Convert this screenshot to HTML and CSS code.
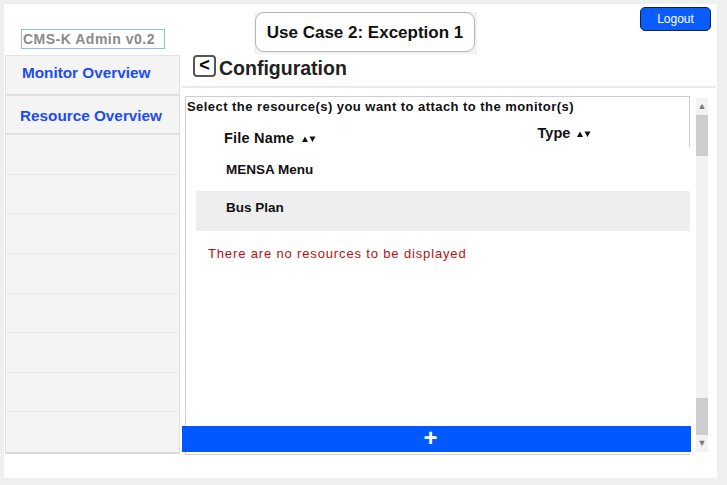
FILE: index.html
```html
<!DOCTYPE html>
<html>
<head>
<meta charset="utf-8">
<link rel="stylesheet" href="styles.css">
</head>
<body>
<div class="page">
  <header class="topbar">
    <div class="brand">CMS-K Admin v0.2</div>
    <div class="title-wrap"><div class="title">Use Case 2: Exception 1</div></div>
    <button class="logout">Logout</button>
  </header>
  <div class="body">
    <nav class="sidebar">
      <div class="nav-item nav-monitor">Monitor Overview</div>
      <div class="nav-item nav-resource">Resource Overview</div>
      <div class="nav-item"></div>
      <div class="nav-item"></div>
      <div class="nav-item"></div>
      <div class="nav-item"></div>
      <div class="nav-item"></div>
      <div class="nav-item"></div>
      <div class="nav-item"></div>
      <div class="nav-item last"></div>
    </nav>
    <main class="main">
      <div class="main-head">
        <span class="back">&lt;</span>
        <h1 class="heading">Configuration</h1>
      </div>
      <div class="content">
        <div class="box">
          <div class="box-top">
            <p class="hint">Select the resource(s) you want to attach to the monitor(s)</p>
            <div class="thead">
              <span class="col-name">File Name <svg class="sort" width="14" height="8" viewBox="0 0 14 8"><path d="M0 7 L3 1.5 L6 7 Z M7.5 1.5 L13.5 1.5 L10.5 7 Z" fill="#111"/></svg></span>
              <span class="col-type">Type <svg class="sort" width="14" height="8" viewBox="0 0 14 8"><path d="M0 7 L3 1.5 L6 7 Z M7.5 1.5 L13.5 1.5 L10.5 7 Z" fill="#111"/></svg></span>
            </div>
          </div>
          <div class="row row-mensa">MENSA Menu</div>
          <div class="row row-bus">Bus Plan</div>
          <p class="empty">There are no resources to be displayed</p>
          <div class="addbar">+</div>
        </div>
        <div class="scrollbar">
          <span class="arrow">▲</span>
          <div class="thumb thumb-a"></div>
          <div class="track"></div>
          <div class="thumb thumb-b"></div>
          <span class="arrow">▼</span>
        </div>
      </div>
    </main>
  </div>
</div>
</body>
</html>
```

FILE: styles.css
```css
* { box-sizing: border-box; }
html, body { margin: 0; }
body {
  background: #efefef;
  padding: 4px 10px 7px 4px;
  font-family: "Liberation Sans", Arial, sans-serif;
}
.page {
  width: 713px;
  height: 474px;
  background: #fff;
  display: flex;
  flex-direction: column;
}
.topbar {
  height: 51px;
  display: flex;
  align-items: flex-start;
}
.brand {
  margin-left: 17px;
  margin-top: 25px;
  width: 144px;
  height: 20px;
  border: 1px solid #8cbcec;
  color: #8a8a8a;
  font-weight: bold;
  font-size: 14px;
  letter-spacing: 0.5px;
  line-height: 18px;
  padding-left: 1px;
  white-space: nowrap;
  overflow: hidden;
}
.title-wrap {
  margin-left: 89px;
  margin-top: 8px;
  background: #f2f2f2;
  padding: 0 2px 2px 1px;
}
.title {
  width: 220px;
  height: 40px;
  background: #fff;
  border: 1px solid #b5b5b5;
  border-radius: 9px;
  font-weight: bold;
  font-size: 17px;
  line-height: 39px;
  text-align: center;
  color: #111;
}
.logout {
  margin-left: auto;
  margin-right: 6px;
  margin-top: 3px;
  width: 71px;
  height: 24px;
  background: #0a5cff;
  border: 1px solid #14213f;
  border-radius: 5px;
  color: #fff;
  font-family: "Liberation Sans", Arial, sans-serif;
  font-size: 12px;
  padding: 0;
}
.body {
  display: flex;
  flex: 1;
}
.sidebar {
  margin-left: 1px;
  width: 175px;
  height: 399px;
  background: #f4f4f4;
  border: 1px solid #e2e2e2;
  border-bottom: 2px solid #dcdcdc;
  display: flex;
  flex-direction: column;
}
.nav-item {
  height: 39.7px;
  border-bottom: 1px solid #e9e9e9;
  font-weight: bold;
  font-size: 15.3px;
  color: #1d4cf5;
  display: flex;
  align-items: center;
}
.nav-item.last { border-bottom: none; }
.nav-monitor { padding-left: 16px; padding-bottom: 4px; border-bottom: 2px solid #e0e0e0; }
.nav-resource { padding-left: 14px; padding-top: 3px; border-bottom: 2px solid #e0e0e0; }
.main {
  flex: 1;
  margin-left: 2px;
  display: flex;
  flex-direction: column;
}
.main-head {
  height: 33px;
  margin-right: 1px;
  border-bottom: 2px solid #e9e9e9;
  display: flex;
  align-items: flex-start;
}
.back {
  margin-left: 11px;
  width: 23px;
  height: 22px;
  border: 2px solid #555;
  border-radius: 4px;
  font-weight: bold;
  font-size: 18px;
  line-height: 16px;
  text-align: center;
  color: #000;
}
.heading {
  margin: 0 0 0 3px;
  font-size: 19.5px;
  font-weight: bold;
  color: #222;
  line-height: 26px;
}
.content {
  display: flex;
  margin-top: 8px;
}
.box {
  margin-left: 3px;
  width: 505px;
  height: 359px;
  border: 1px solid #cfcfcf;
  border-right: none;
  display: flex;
  flex-direction: column;
}
.box-top {
  border-right: 1px solid #cfcfcf;
  height: 50px;
}
.hint {
  margin: 0;
  padding: 2px 0 0 1px;
  font-size: 13px;
  letter-spacing: 0.45px;
  font-weight: bold;
  color: #111;
  line-height: 16px;
  white-space: nowrap;
}
.thead {
  display: flex;
  align-items: flex-start;
  font-weight: bold;
  color: #111;
}
.col-name {
  margin-left: 38px;
  margin-top: 15px;
  font-size: 14.5px;
  letter-spacing: 0.2px;
}
.col-type {
  margin-left: 222px;
  margin-top: 10px;
  font-size: 14.5px;
}
.sort {
  margin-left: 3px;
  vertical-align: 0;
}
.row {
  font-weight: bold;
  font-size: 13.5px;
  color: #111;
  padding-left: 40px;
}
.row-mensa {
  height: 44px;
  padding-top: 15px;
}
.row-bus {
  margin-left: 10px;
  padding-left: 30px;
  height: 40px;
  background: #eeeeee;
  line-height: 34px;
}
.empty {
  margin: 15px 0 0 22px;
  color: #b40f0f;
  font-size: 13px;
  letter-spacing: 0.85px;
}
.addbar {
  margin-top: auto;
  margin-bottom: 2px;
  margin-left: -4px;
  width: 509px;
  height: 26px;
  padding-right: 12px;
  background: #0059ff;
  color: #fff;
  font-weight: bold;
  font-size: 24px;
  line-height: 24px;
  text-align: center;
}
.scrollbar {
  margin-left: 6px;
  margin-top: 2px;
  width: 12px;
  height: 354px;
  background: #f2f2f2;
  display: flex;
  flex-direction: column;
  align-items: center;
}
.arrow {
  font-size: 9px;
  color: #777;
  height: 17px;
  line-height: 17px;
}
.thumb {
  width: 12px;
  background: #cdcdcd;
}
.thumb-a { height: 41px; }
.track { flex: 1; }
.thumb-b { height: 37px; }
```
